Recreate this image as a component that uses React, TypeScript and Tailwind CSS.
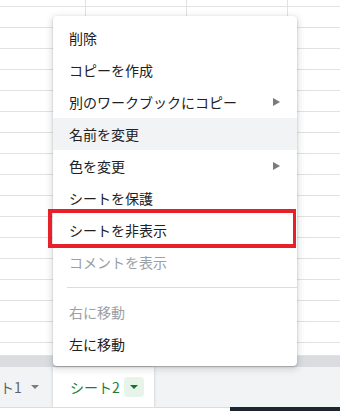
import React from 'react';

type Item = { label: string; disabled?: boolean; submenu?: boolean; active?: boolean };

const topItems: Item[] = [
  { label: '削除' },
  { label: 'コピーを作成' },
  { label: '別のワークブックにコピー', submenu: true },
  { label: '名前を変更', active: true },
  { label: '色を変更', submenu: true },
  { label: 'シートを保護' },
  { label: 'シートを非表示' },
  { label: 'コメントを表示', disabled: true },
];

const bottomItems: Item[] = [
  { label: '右に移動', disabled: true },
  { label: '左に移動' },
];

const SubArrow = () => (
  <svg width="7" height="8" viewBox="0 0 7 8">
    <path d="M0 0 L7 4 L0 8 Z" fill="#7a7a7a" />
  </svg>
);

const MenuRow = ({ item }: { item: Item }) => (
  <div
    className={`flex h-8 items-center justify-between pl-4 pr-[17px] text-[14px] leading-none ${
      item.active ? 'bg-[#f1f3f4]' : ''
    } ${item.disabled ? 'text-[#9aa0a6]' : 'text-[#202124]'}`}
  >
    <span>{item.label}</span>
    {item.submenu && <SubArrow />}
  </div>
);

// spreadsheet rows behind the menu
const rows = Array.from({ length: 16 });

const Row = ({ h }: { h: string }) => (
  <div className={`flex ${h} border-b border-[#e2e2e2]`}>
    <div className="w-[86px] border-r border-[#e2e2e2]" />
    <div className="w-[101px] border-r border-[#e2e2e2]" />
    <div className="w-[101px] border-r border-[#e2e2e2]" />
    <div className="flex-1" />
  </div>
);

export default function App() {
  return (
    <div
      className="relative h-[411px] w-[340px] overflow-hidden bg-white"
      style={{ fontFamily: '"Noto Sans CJK JP", "Noto Sans", sans-serif' }}
    >
      {/* Grid */}
      <div className="flex flex-col">
        <Row h="h-[7px]" />
        {rows.map((_, i) => (
          <Row key={i} h="h-[21px]" />
        ))}
        <Row h="h-[13px]" />
      </div>

      {/* scrollbar band */}
      <div className="h-[11px] bg-[#dadce0]" />

      {/* Sheet tabs */}
      <div className="flex h-10 items-stretch bg-[#f1f3f4]">
        <div className="ml-[-28px] flex w-[81px] items-center gap-[9px] text-[14px] text-[#5f6368]">
          <span>シート1</span>
          <svg width="8" height="4" viewBox="0 0 8 4">
            <path d="M0 0 L8 0 L4 4 Z" fill="#7a7d80" />
          </svg>
        </div>
        <div className="flex items-center gap-1 bg-white pl-[17px] pr-[10px] shadow-[1px_0_2px_rgba(60,64,67,0.12),-1px_0_2px_rgba(60,64,67,0.12)]">
          <span className="text-[14px] text-[#188038]">シート2</span>
          <div className="flex h-5 w-5 items-center justify-center rounded-sm bg-[#e6f4ea]">
            <svg width="8" height="4" viewBox="0 0 8 4">
              <path d="M0 0 L8 0 L4 4 Z" fill="#137333" />
            </svg>
          </div>
        </div>
      </div>

      {/* bottom strip */}
      <div className="flex h-1">
        <div className="w-[230px] border-t border-[#dadce0] bg-white" />
        <div className="flex-1 bg-[#1e2430]" />
      </div>

      {/* Context menu */}
      <div className="absolute left-[53px] top-4 w-[244px] rounded bg-white py-1.5 shadow-[0_2px_6px_2px_rgba(60,64,67,0.15),0_1px_2px_rgba(60,64,67,0.3)]">
        {topItems.map((item) => (
          <MenuRow key={item.label} item={item} />
        ))}
        <div className="pb-2 pt-[9px]">
          <div className="ml-[14px] border-t border-[#dadce0]" />
        </div>
        {bottomItems.map((item) => (
          <MenuRow key={item.label} item={item} />
        ))}
      </div>

      {/* highlight box */}
      <div className="absolute left-[48px] top-[209px] h-[39px] w-[248px] border-4 border-r-[3px] border-[#e8202a]" />
    </div>
  );
}
